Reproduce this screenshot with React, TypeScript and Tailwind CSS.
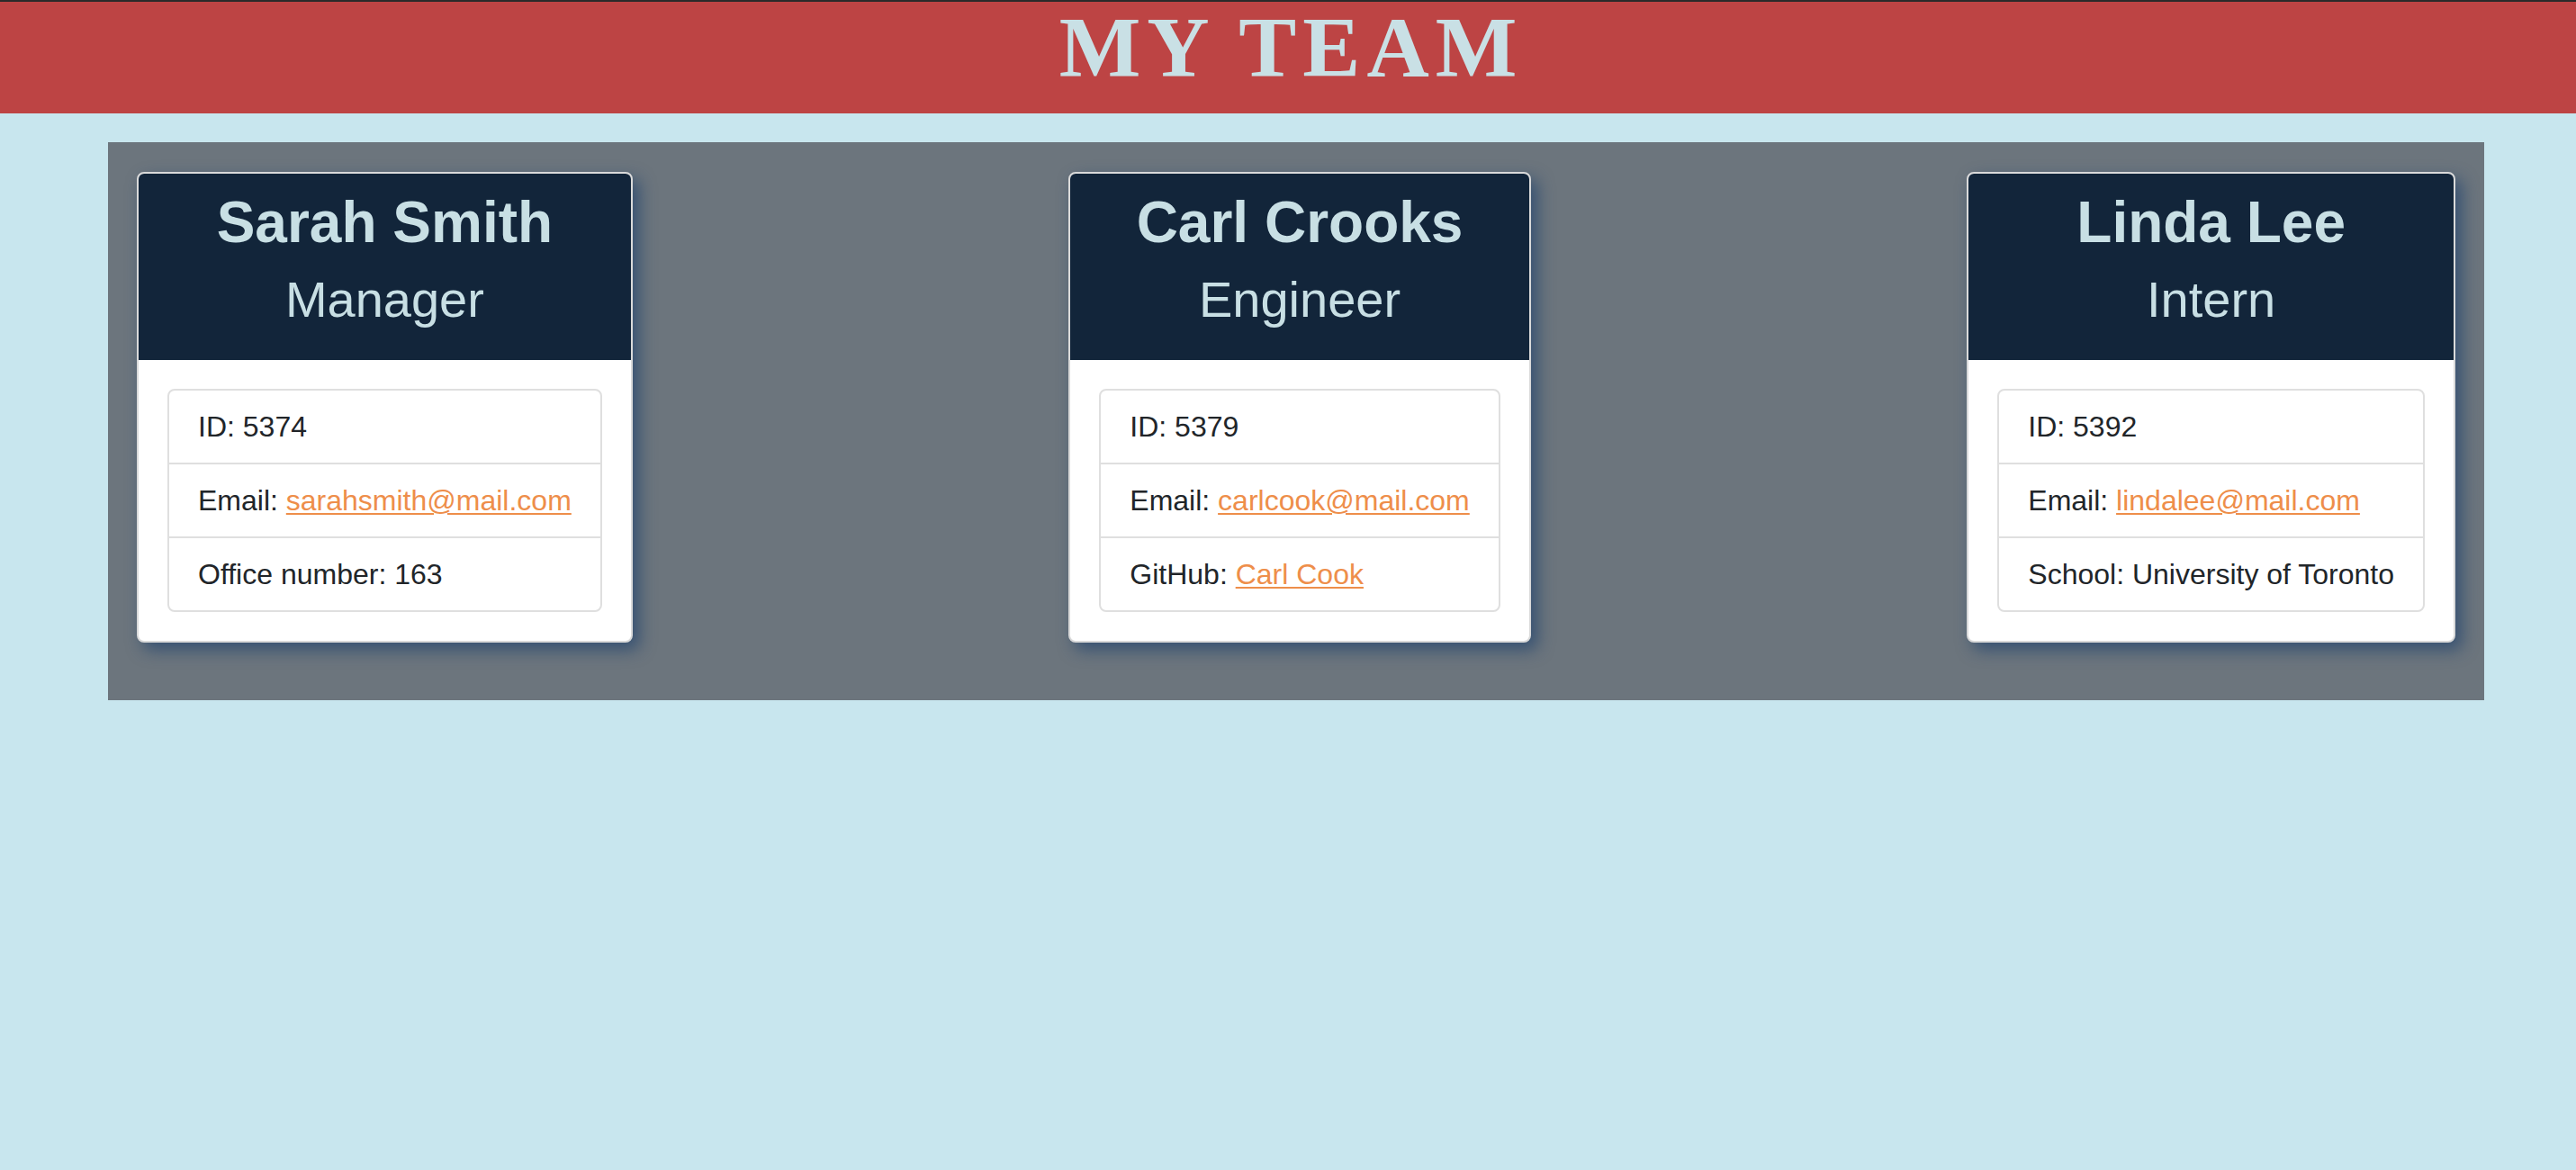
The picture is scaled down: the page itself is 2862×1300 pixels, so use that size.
import React from "react";

type Member = {
    name: string;
    role: string;
    id: number;
    email: string;
    extraLabel: string;
    extraValue: string;
    extraLink?: boolean;
};

const team: Member[] = [
    { name: "Sarah Smith", role: "Manager", id: 5374, email: "sarahsmith@mail.com", extraLabel: "Office number", extraValue: "163" },
    { name: "Carl Crooks", role: "Engineer", id: 5379, email: "carlcook@mail.com", extraLabel: "GitHub", extraValue: "Carl Cook", extraLink: true },
    { name: "Linda Lee", role: "Intern", id: 5392, email: "lindalee@mail.com", extraLabel: "School", extraValue: "University of Toronto" },
];

const linkClass = "text-[#ee8e4a] underline decoration-2 underline-offset-[3px]";

function MemberCard({ member }: { member: Member }) {
    return (
        <article className="mb-8 flex flex-col overflow-hidden rounded-lg border-2 border-[#dadada] bg-white shadow-[7px_8px_18px_rgba(30,65,110,0.7)]">
            <header className="bg-[#12253a] px-8 pt-[22px] pb-[39px] text-center text-[#c8dfe4]">
                <h2 className="mb-[26px] text-[64px] font-bold leading-[64px]">{member.name}</h2>
                <h3 className="text-[56px] leading-[56px]">{member.role}</h3>
            </header>

            <div className="p-8">
                <ul className="rounded-lg border-2 border-[#dfdfdf] text-[32px] leading-[48px] text-[#212529]">
                    <li className="whitespace-nowrap px-8 py-4">ID: {member.id}</li>
                    <li className="whitespace-nowrap border-t-2 border-[#dfdfdf] px-8 py-4">
                        Email: <a href={`mailto:${member.email}`} className={linkClass}>{member.email}</a>
                    </li>
                    <li className="whitespace-nowrap border-t-2 border-[#dfdfdf] px-8 py-4">
                        {member.extraLabel}:{" "}
                        {member.extraLink ? (
                            <a href="#" className={linkClass}>{member.extraValue}</a>
                        ) : (
                            member.extraValue
                        )}
                    </li>
                </ul>
            </div>
        </article>
    );
}

export default function App() {
    return (
        <div className="min-h-screen bg-[#c8e6ee] font-['Liberation_Sans',Arial,sans-serif]">
            <header className="h-[126px] border-t-2 border-[#2a2a2a] bg-[#bd4444] text-center">
                <h1 className="pl-[7px] font-['Liberation_Serif','Times_New_Roman',serif] text-[96px] font-bold leading-[102px] tracking-[7px] text-[#c9e0e5]">
                    MY TEAM
                </h1>
            </header>

            <main className="mt-8 ml-[120px] mr-[102px] flex items-start justify-between bg-[#6c757d] px-8 pt-[33px] pb-8">
                {team.map((member) => (
                    <MemberCard key={member.id} member={member} />
                ))}
            </main>
        </div>
    );
}
